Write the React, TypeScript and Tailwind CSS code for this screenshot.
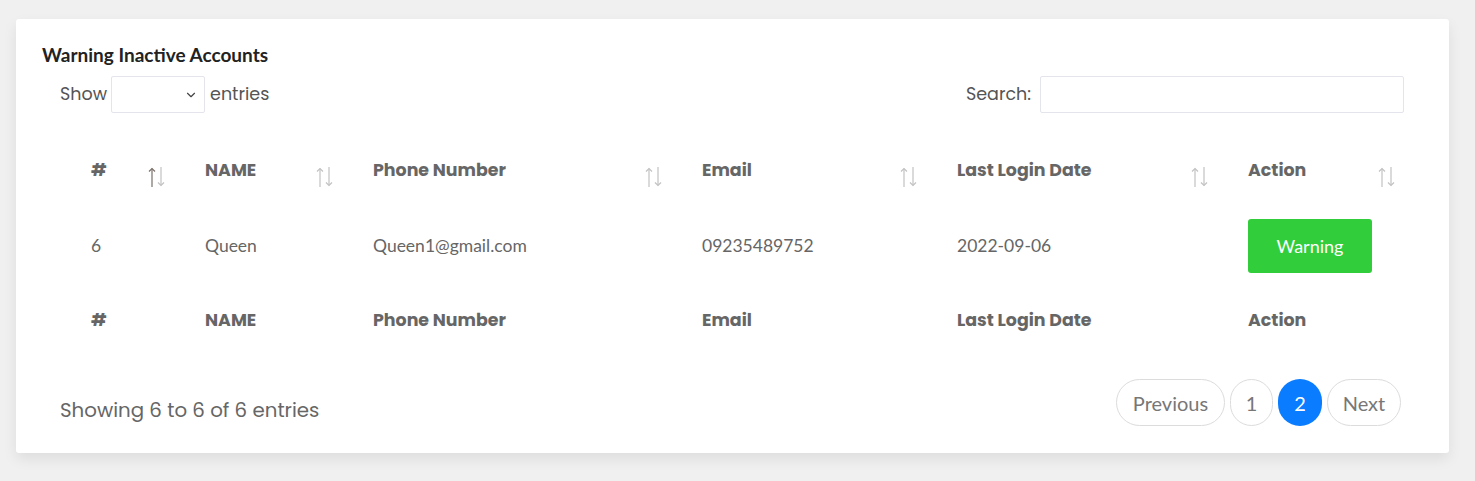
import { ChevronDown } from "lucide-react";

const cols = ["w-[114px]", "w-[168px]", "w-[329px]", "w-[255px]", "w-[291px]", "w-[187px]"];
const heads = ["#", "NAME", "Phone Number", "Email", "Last Login Date", "Action"];

const poppins = "font-['Poppins','Inter','Liberation_Sans',sans-serif]";
const lato = "font-['Lato','Liberation_Sans',sans-serif]";

function SortArrows({ active }: { active?: boolean }) {
  return (
    <svg width="18" height="22" viewBox="0 0 18 22" fill="none" strokeWidth="1.2" className="mt-[6px]">
      <g stroke={active ? "#7a7068" : "#c2c2c2"}>
        <path d="M4 2.5V21" />
        <path d="M1 5.5L4 2.5L7 5.5" />
      </g>
      <g stroke="#c2c2c2">
        <path d="M13 1V19.5" />
        <path d="M10 16.5L13 19.5L16 16.5" />
      </g>
    </svg>
  );
}

const App = () => {
  const row = ["6", "Queen", "Queen1@gmail.com", "09235489752", "2022-09-06"];

  return (
    <div className="min-h-[481px] bg-[#f0f0f0] pt-[19px] px-4">
      <div className="bg-white rounded-[3px] shadow-[0_6px_14px_rgba(0,0,0,0.08)] h-[434px] w-[1433px] pt-[25px] px-[26px]">
        <h2 className={`${lato} font-bold text-[19px] text-[#222] leading-[22px]`}>Warning Inactive Accounts</h2>

        {/* controls */}
        <div className={`flex items-center justify-between pl-[18px] pr-[19px] mt-[10px] ${poppins} text-[17.5px] text-[#555]`}>
          <div className="flex items-center">
            <span>Show</span>
            <div className="ml-[4px] mr-[5px] w-[94px] h-[37px] border border-[#e4e4ec] rounded-[2px] flex items-center justify-end pr-[6px]">
              <ChevronDown size={14} strokeWidth={2} className="text-[#444]" />
            </div>
            <span>entries</span>
          </div>
          <div className="flex items-center">
            <span>Search:</span>
            <input className="ml-[9px] w-[364px] h-[37px] border border-[#e4e4ec] rounded-[2px] outline-none" />
          </div>
        </div>

        {/* table */}
        <div className="mx-[18px] mt-[28px]">
          <div className="flex h-[59px]">
            {heads.map((h, i) => (
              <div key={h} className={`${cols[i]} flex items-start justify-between pl-[31px] pr-[8px] pt-[19px]`}>
                <span className={`${poppins} font-bold text-[17.4px] text-[#666] leading-[20px]`}>{h}</span>
                <SortArrows active={i === 0} />
              </div>
            ))}
          </div>
          <div className={`flex items-center h-[92px] ${lato} text-[17.5px] text-[#666]`}>
            {row.map((v, i) => (
              <div key={i} className={`${cols[i]} pl-[31px]`}>{v}</div>
            ))}
            <div className={`${cols[5]} pl-[31px]`}>
              <button className="w-[124px] h-[54px] bg-[#32cd3a] rounded-[3px] text-white text-[18px]">Warning</button>
            </div>
          </div>
          <div className="flex h-[58px] items-start pt-[16px]">
            {heads.map((h, i) => (
              <div key={h} className={`${cols[i]} pl-[31px]`}>
                <span className={`${poppins} font-bold text-[17.4px] text-[#666] leading-[20px]`}>{h}</span>
              </div>
            ))}
          </div>
        </div>

        {/* footer */}
        <div className="flex items-start justify-between pl-[18px] pr-[22px] mt-[29px]">
          <span className={`${poppins} text-[19.8px] leading-[30px] text-[#666] mt-[16px]`}>Showing 6 to 6 of 6 entries</span>
          <div className={`flex items-center gap-[5px] ${lato} text-[20px] text-[#777]`}>
            <button className="h-[47px] w-[109px] rounded-full border border-[#dcdcdc]">Previous</button>
            <button className="h-[47px] w-[43px] rounded-full border border-[#dcdcdc]">1</button>
            <button className="h-[47px] w-[44px] rounded-full bg-[#0a7cff] text-white">2</button>
            <button className="h-[47px] w-[74px] rounded-full border border-[#dcdcdc]">Next</button>
          </div>
        </div>
      </div>
    </div>
  );
};

export default App;
